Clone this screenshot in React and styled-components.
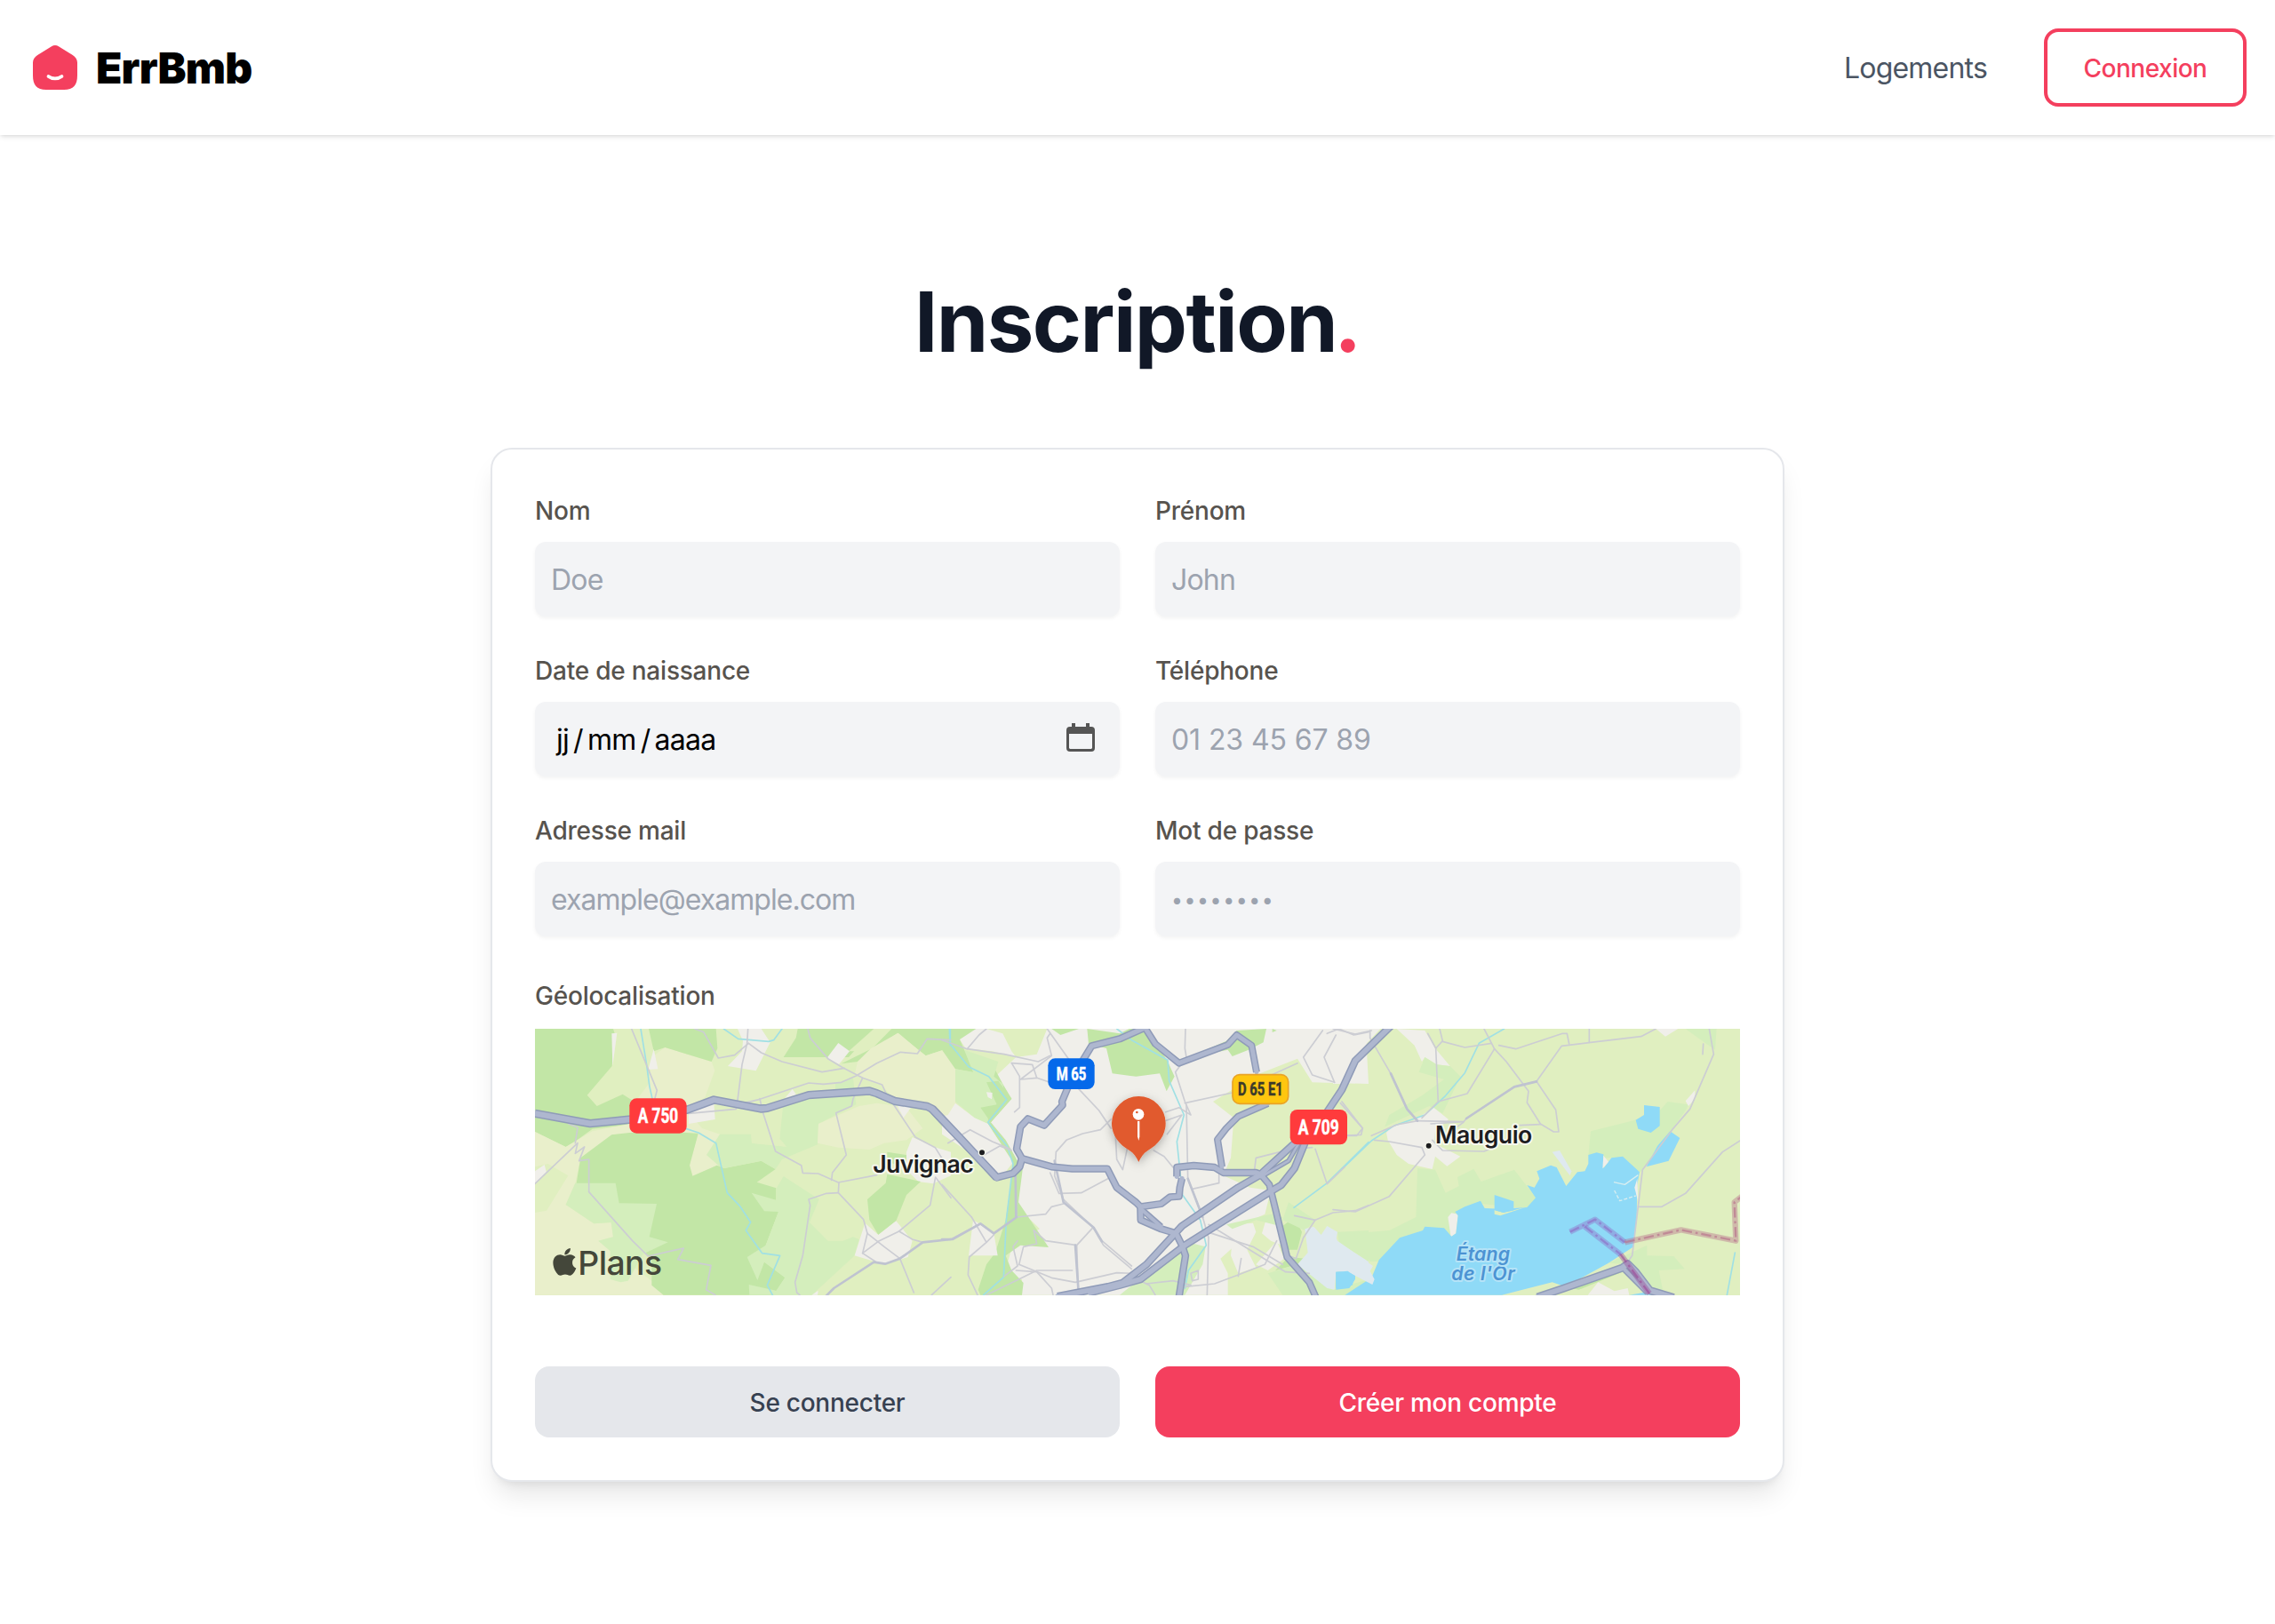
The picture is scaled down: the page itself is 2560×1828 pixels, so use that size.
import React from "react";
import styled, { createGlobalStyle } from "styled-components";
import { FaApple } from "react-icons/fa6";

const GlobalStyle = createGlobalStyle`
  *, *::before, *::after { box-sizing: border-box; }
  body {
    margin: 0;
    background: #fff;
    font-family: Inter, "Liberation Sans", sans-serif;
    -webkit-font-smoothing: antialiased;
  }
`;

const Page = styled.div`
  min-height: 1828px;
  display: flex;
  flex-direction: column;
`;

const NavBar = styled.header`
  height: 152px;
  padding: 0 32px;
  display: flex;
  align-items: center;
  justify-content: space-between;
  box-shadow: 0 2px 6px rgba(0, 0, 0, 0.1), 0 2px 4px -2px rgba(0, 0, 0, 0.1);
`;

const Brand = styled.a`
  display: flex;
  align-items: center;
  gap: 16px;
`;

const LogoIcon = styled.svg`
  width: 60px;
  height: 60px;
`;

const BrandName = styled.span`
  padding-top: 2px;
  font-size: 48px;
  line-height: 60px;
  font-weight: 900;
  letter-spacing: -0.8px;
  color: #000;
`;

const NavLinks = styled.nav`
  display: flex;
  align-items: center;
  gap: 64px;
`;

const NavLink = styled.a`
  padding-top: 2px;
  font-size: 32px;
  line-height: 48px;
  letter-spacing: -0.8px;
  color: #4b5563;
`;

const OutlineButton = styled.button`
  width: 228px;
  height: 88px;
  padding: 2px 0 0;
  border: 4px solid #f43f5e;
  border-radius: 16px;
  background: #fff;
  color: #f43f5e;
  font: 550 28px/40px Inter, "Liberation Sans", sans-serif;
  letter-spacing: -0.5px;
`;

const Main = styled.main`
  display: flex;
  flex-direction: column;
  align-items: center;
`;

const Title = styled.h1`
  margin: 162px 0 94px;
  font-size: 94px;
  line-height: 96px;
  font-weight: 700;
  letter-spacing: -1.6px;
  color: #111827;
`;

const Accent = styled.span`
  margin-left: -3px;
  color: #f43f5e;
`;

const Card = styled.form`
  width: 1456px;
  padding: 48px;
  border: 2px solid #e5e7eb;
  border-radius: 24px;
  background: #fff;
  box-shadow: 0 20px 30px -6px rgba(0, 0, 0, 0.1), 0 8px 12px -8px rgba(0, 0, 0, 0.1);
`;

const FieldGrid = styled.div`
  display: grid;
  grid-template-columns: 1fr 1fr;
  gap: 40px;
`;

const Field = styled.label`
  display: flex;
  flex-direction: column;
  gap: 16px;
`;

const Label = styled.span`
  height: 40px;
  padding-top: 1px;
  font-size: 28px;
  line-height: 40px;
  font-weight: 550;
  letter-spacing: -0.22px;
  color: #57534e;
`;

const Input = styled.input`
  height: 84px;
  width: 100%;
  padding: 1px 18px 0;
  border: 0;
  border-radius: 12px;
  background: #f3f4f6;
  box-shadow: 0 2px 4px rgba(0, 0, 0, 0.05);
  font: 400 ${(p) => p.$size || "32px"}/48px Inter, "Liberation Sans", sans-serif;
  letter-spacing: ${(p) => p.$tracking || "-0.8px"};
  &::placeholder { color: #9ca3af; opacity: 1; }
`;

const DateBox = styled.span`
  height: 84px;
  padding: 1px 26px 0 24px;
  border-radius: 12px;
  background: #f3f4f6;
  box-shadow: 0 2px 4px rgba(0, 0, 0, 0.05);
  display: flex;
  align-items: center;
  justify-content: space-between;
`;

const DateParts = styled.span`
  display: flex;
  gap: 5px;
  font-size: 32px;
  line-height: 48px;
  letter-spacing: -0.7px;
  color: #000;
`;

const CalendarIcon = styled.svg`
  width: 36px;
  height: 36px;
  margin-top: -5px;
`;

const GeoSection = styled.section`
  margin-top: 46px;
  display: flex;
  flex-direction: column;
  gap: 18px;
`;

const MapView = styled.svg`
  display: block;
  width: 1356px;
  height: 300px;
`;

const Actions = styled.div`
  margin-top: 80px;
  display: grid;
  grid-template-columns: 1fr 1fr;
  gap: 40px;
`;

const ActionButton = styled.button`
  height: 80px;
  padding: 2px 0 0;
  border: 0;
  border-radius: 16px;
  background: ${(p) => (p.$primary ? "#f43f5e" : "#e5e7eb")};
  color: ${(p) => (p.$primary ? "#fff" : "#374151")};
  font: 550 28px/40px Inter, "Liberation Sans", sans-serif;
  letter-spacing: -0.25px;
`;

const LAND = "#e0efc0";
const FOREST = "#c2e6a6";
const MINT = "#d4eebc";
const BEIGE = "#e9efcb";
const URBAN = "#f0efea";
const WATER = "#8fdaf7";
const AIRPORT = "#dfe9ef";

/* The map is drawn in three sheets (west, centre, east), each with its own origin. */
const SHEETS = { west: -36, centre: 1374, east: 2694 };

const AREAS = {
  west: [
    [FOREST, "36,54 300,54 305,70 296,180 212,278 245,315 332,275 375,302 380,340 350,378 230,392 175,432 140,453 36,402"],
    [BEIGE, "36,402 140,453 230,400 355,375 548,330 600,390 660,410 655,515 568,551 558,515 587,405 480,400 295,412 190,490 172,575 140,648 235,712 293,708 300,757 250,770 330,830 430,905 470,953 36,953"],
    [LAND, "36,520 80,510 148,550 75,668 36,675"],
    [BEIGE, "430,150 475,117 632,165 643,195 610,285 555,325 440,330 375,300 420,240"],
    [FOREST, "295,412 355,405 480,400 587,408 558,515 568,551 650,515 675,525 800,500 848,528 785,572 850,592 850,632 858,672 815,785 879,895 850,938 840,953 470,953 430,920 430,830 172,600 190,490"],
    [MINT, "172,575 308,575 320,643 447,645 422,757 485,775 400,815 350,905 325,910 290,900 290,805 250,770 300,757 293,708 235,712 140,648"],
    [MINT, "615,480 660,410 765,410 768,440 885,452 862,425 875,300 1110,220 1120,310 993,375 990,445 870,495 848,528 800,500 675,525 655,515"],
    [LAND, "765,360 865,330 862,425 885,452 768,440"],
    [LAND, "875,300 910,255 1050,238 1050,272 960,285 870,320"],
    [MINT, "850,595 875,552 995,630 963,708 1025,770 1075,770 1110,757 1130,765 1115,820 985,940 975,953 760,953 758,918 850,938 879,895 810,843 787,903 752,825 815,785 858,672 810,670 767,608 850,632"],
    [FOREST, "810,843 879,895 850,938 790,915"],
    [FOREST, "420,54 647,54 652,120 632,165 475,117 437,130"],
    [FOREST, "923,54 1180,54 1095,150 875,150 917,85"],
    [FOREST, "1070,172 1175,120 1240,54 1460,54 1460,150 1415,125 1355,145 1260,68 1170,130 1125,165"],
    [LAND, "1180,54 1235,54 1120,130 1095,130"],
    [BEIGE, "1125,165 1170,120 1262,68 1330,125 1355,145 1415,125 1455,150 1455,400 1380,310 1250,290 1200,240 1115,210"],
    [BEIGE, "993,375 1130,315 1190,305 1290,320 1345,390 1290,430 1215,440 1165,462 1060,455 990,440"],
    [URBAN, "738,95 720,54 800,54 830,100 782,196 687,180 735,130"],
    [URBAN, "1060,102 1098,130 1062,174 1022,152"],
    [URBAN, "555,335 640,305 644,360 555,375"],
    [URBAN, "437,122 451,190 418,192"],
    [URBAN, "295,70 313,68 298,180"],
    [URBAN, "905,258 918,276 880,288"],
    [URBAN, "1258,310 1305,320 1280,355"],
    [URBAN, "36,535 68,513 75,540 36,577"],
    [FOREST, "1225,470 1290,480 1290,530 1225,500"],
    [URBAN, "1310,420 1390,455 1440,470 1440,550 1380,577 1330,570 1290,530 1290,470"],
    [FOREST, "1225,545 1338,570 1290,615 1255,703 1195,750 1165,700 1158,630 1220,575"],
    [URBAN, "1255,703 1310,770 1295,825 1215,850 1115,820 1150,710 1195,750"],
    [URBAN, "992,938 990,953 970,953"],
  ],
  centre: [
    [URBAN, "35,54 1430,54 1440,240 1250,235 1200,155 1060,210 915,300 985,355 975,490 950,550 1040,590 1110,600 1090,680 1000,720 985,790 940,830 965,880 965,953 270,953 270,900 205,900 240,780 330,730 250,650 270,520 240,490 160,375 215,290 180,215 250,150 170,130 80,120"],
    [BEIGE, "0,120 45,190 45,310 0,350"],
    [FOREST, "0,54 115,54 60,90 75,125 100,150 165,165 205,240 235,290 165,370 215,430 272,530 258,640 360,792 265,785 215,820 235,870 275,912 270,953 130,953 122,935 150,850 180,810 215,700 235,560 240,510 155,375 150,255 100,200 45,190 0,125"],
    [MINT, "45,190 105,200 75,125 190,165 175,215 205,240 215,290 155,330 155,375 110,355 45,300"],
    [FOREST, "150,235 190,230 235,290 165,370 130,320 185,310"],
    [URBAN, "150,268 170,270 168,292 155,285"],
    [URBAN, "0,350 20,345 45,305 110,355 155,375 240,505 205,550 185,562 120,490 0,410"],
    [LAND, "150,54 355,54 320,140 250,150 235,130 205,70"],
    [FOREST, "370,54 462,54 400,75"],
    [FOREST, "490,54 600,70 640,50 685,54 760,160 785,215 758,265 735,205 655,215 575,205 555,120 495,105"],
    [FOREST, "800,165 960,95 995,60 1095,54 1085,100 1035,125 980,147 965,125 840,150"],
    [FOREST, "1115,54 1130,60 1115,66"],
    [URBAN, "105,700 125,712 175,745 188,820 90,820"],
    [URBAN, "985,715 1050,710 1060,740 1030,800 1060,860 1000,880 975,820"],
    [URBAN, "1095,695 1165,725 1160,790 1110,770 1080,745"],
    [URBAN, "1060,850 1130,770 1155,830 1100,870"],
    [MINT, "690,880 830,775 890,790 880,850 820,953 600,953 660,905"],
    [MINT, "960,715 1110,680 1150,690 1140,720 1060,700 980,730"],
    [FOREST, "1150,720 1190,690 1215,740 1200,800 1165,800"],
    [MINT, "1170,640 1260,700 1225,735 1150,700"],
    [FOREST, "1125,870 1170,825 1230,830 1230,852 1200,850"],
    [MINT, "1100,880 1200,850 1320,935 1440,900 1440,953 1150,953"],
    [AIRPORT, "1225,730 1255,722 1280,750 1300,720 1335,740 1330,770 1440,840 1440,910 1395,870 1330,875 1325,935 1300,930 1200,850 1235,810"],
    [MINT, "1335,740 1440,735 1440,840 1340,775"],
    [WATER, "1330,875 1395,872 1395,900 1375,930 1330,935"],
  ],
  east: [
    [URBAN, "0,54 160,54 70,150 30,240 0,240"],
    [URBAN, "215,54 310,60 345,120 395,180 350,175 310,150 300,165 275,110"],
    [MINT, "310,150 350,175 395,180 430,215 370,340 325,315 175,385 190,345 300,280 375,225 290,200"],
    [URBAN, "180,405 200,380 270,365 340,320 390,360 345,400 340,440 430,485 385,518 345,485 335,528 255,510 215,480 185,430"],
    [MINT, "285,525 345,530 380,608 425,585 420,555 475,527 500,570 612,530 685,625 655,660 500,645 410,690 395,755 300,735 225,765 155,840 125,840 70,745 190,735 280,690"],
    [MINT, "862,485 870,400 1020,362 1103,330 1130,300 1200,310 1190,330 1140,400 1050,525 1035,540 978,490 913,490"],
    [URBAN, "1222,262 1222,290 1200,315 1190,298"],
    [MINT, "1190,54 1295,54 1290,125 1240,90"],
    [URBAN, "1090,54 1165,54 1122,80"],
    [URBAN, "388,690 400,676 422,680 415,745 398,757"],
    [WATER, "40,953 130,895 155,835 225,760 303,735 310,722 375,727 400,755 415,745 422,685 412,672 445,655 498,635 512,660 565,662 655,657 684,625 655,582 680,590 697,560 688,535 735,515 755,522 787,585 825,538 850,535 862,510 862,480 890,472 913,478 913,525 940,490 978,485 1035,538 1027,580 1025,700 1015,790 930,845 830,900 775,922 740,910 640,935 570,953"],
    [URBAN, "1027,560 1030,640 1018,590"],
    [URBAN, "913,482 930,503 910,526"],
    [LAND, "545,665 575,675 610,667 655,655 565,685 545,680"],
    [WATER, "545,615 610,637 610,667 575,675 545,667"],
    [WATER, "1050,312 1103,318 1103,382 1073,405 1030,392 1022,362 1050,345"],
    [WATER, "1138,400 1171,423 1133,500 1058,520 1095,450"],
    [AIRPORT, "0,735 15,770 135,855 125,872 140,900 133,918 60,880 0,870"],
    [WATER, "10,875 50,872 75,890 65,920 10,930"],
    [AIRPORT, "740,470 765,465 805,535 800,550"],
    [FOREST, "830,900 975,850 990,870 830,935 775,925"],
    [MINT, "930,845 1060,785 1060,820 1150,822 1187,865 1100,870 1115,945 1060,920 1000,850"],
    [URBAN, "860,953 895,910 950,940 995,930 1000,953"],
    [WATER, "1000,953 1060,943 1080,953"],
  ],
};

const STREAMS = {
  west: [
    "393,54 412,170 423,250 432,290", "548,392 588,405 647,440 685,608 727,652 764,707 748,735 803,812 863,820 820,920 838,953",
    "673,54 722,88 825,97 842,92 870,54", "1438,54 1438,110",
  ],
  centre: [
    "25,54 27,105 90,182 158,215 218,293 155,370 220,450 240,510 217,700 208,893 140,953",
    "590,54 640,92 762,160 767,230 817,345 793,435 812,615 872,700 892,785 832,870 820,930", "1188,658 1300,575 1440,437",
  ],
  east: ["0,557 130,432 205,382 310,345 380,280 445,203 493,103 578,54", "1357,810 1330,953"],
};

const MINOR = {
  west: [
    "362,54 448,262 440,292", "575,54 605,65 655,153 710,143 757,103", "755,54 752,103 735,175 720,295 715,325 555,340",
    "757,103 800,135 870,165 1005,200 1080,187", "957,54 965,85 1025,155 1075,185 1142,220 1208,243 1220,270 1320,420 1387,455 1440,540",
    "720,310 795,292 960,237 1010,241 1070,235 1120,213 1190,170 1270,133 1327,138 1360,88 1440,92",
    "795,290 805,335 848,468 935,515 940,541 992,543 1060,573 1190,548", "1142,220 1110,290 1105,315 1052,338 1087,480 1040,540 1037,565",
    "1062,573 1060,608 1145,698 1158,745 1215,790 1268,830 1315,945", "1060,608 1020,610 960,630 965,650 940,820 914,910 920,945 930,953",
    "36,577 180,440 172,475 203,453 185,500 218,495 218,605 365,770 418,822 538,795 518,833 630,853 614,935 645,953",
    "150,375 180,388 172,440", "1158,745 1142,812 1185,840", "1142,812 1195,772 1265,738 1310,765 1345,775",
    "1265,738 1370,650 1388,555 1440,625", "1440,893 1375,953",
  ],
  centre: [
    "0,92 85,122 210,140 325,165 365,145", "85,122 125,75 150,54", "355,54 430,160", "365,70 355,85 370,145 265,225 320,220 395,245",
    "235,170 262,215 262,320 245,335", "235,170 305,175 320,220", "455,250 530,330 570,390", "570,360 535,395 475,408 420,430 385,470 380,550 410,630 510,725 540,770 640,855",
    "365,540 395,610 470,608 560,560", "510,725 455,785 460,930", "455,785 350,770 310,735", "510,725 530,760 545,785 640,865",
    "248,545 252,690 175,745 130,712 30,765", "252,690 350,680 370,655 410,645", "255,770 240,790 255,855 210,890", "310,735 320,780 275,790 260,850",
    "260,850 370,895 450,910 590,878 640,880", "375,953 370,930 320,875 250,870", "150,953 270,895 320,870 440,870",
    "100,690 150,775 175,750", "150,775 92,825 88,885 120,953", "822,54 820,120 825,150 788,200 820,300 840,345 800,320 755,335",
    "820,305 980,270 1200,170", "825,310 830,560 880,690 900,760 895,953", "740,370 810,345 760,410", "585,400 590,495 610,530 625,460",
    "715,465 750,485 780,522", "845,595 935,575 935,545", "900,715 1160,875 1240,880", "895,740 1050,790 1150,850",
    "820,925 920,915 1000,885 1090,850 1130,770", "690,915 780,905 840,920", "1010,830 1000,890", "840,880 865,870 865,900 845,905 840,880",
    "1285,60 1220,150 1250,210 1325,235", "1330,75 1290,150 1325,235", "1300,70 1340,54 1390,75 1440,65",
    "1345,305 1420,390 1400,415 1370,415", "1260,460 1300,578 1360,520", "1055,530 1060,490 1180,460 1250,455",
    "1190,685 1260,700 1320,675 1395,668 1440,650", "1260,700 1220,760 1195,830 1170,820", "0,580 100,690", "20,440 95,395 170,435 230,460",
    "125,490 195,450 235,465", "640,890 700,920 720,953",
  ],
  east: [
    "125,60 125,85 195,205 250,325 285,365", "320,70 347,120 355,300 300,355", "347,120 370,95 360,54", "370,97 445,117 535,103",
    "510,54 545,122 585,165 660,265 655,303 700,375 745,402 762,402 752,328 687,232", "545,122 453,273 355,300",
    "560,110 617,122 775,70 790,70 797,105", "865,54 865,100", "1090,54 1040,80 870,100 772,112 687,232 612,250 450,357 440,370 415,388",
    "285,365 440,368 330,375", "630,380 700,377", "140,430 190,435 300,455 310,480 190,620 75,672 0,665", "130,415 215,378 285,365",
    "335,430 370,465 510,468 530,460", "30,300 100,390 95,412 30,415", "1270,54 1285,140 1205,325 1145,395 1045,530 1010,820 990,850",
    "1030,655 1110,655 1190,610 1315,470 1374,432", "1250,105 1248,140", "0,54 75,72 130,60",
  ],
};

const SECONDARY = {
  west: ["1015,960 1045,930 1180,842 1218,848 1268,830 1345,775 1440,765"],
  centre: ["0,765 35,765 130,712 175,745 252,690", "248,545 250,690", "450,785 460,930", "380,500 410,640 512,725 540,772", "830,560 880,690"],
  east: ["195,205 250,325 285,365", "687,232 612,250 450,357"],
};

const HIGHWAYS = {
  west: [["36,340 222,374 360,360 548,328 640,294 798,324 820,322 960,278 1165,264 1190,272 1250,298 1360,316 1378,325 1470,422 1595,557", 21]],
  centre: [
    ["-35,325 0,362 185,556 240,542 262,520 270,492", 19],
    ["690,48 600,88 505,112 470,170 430,240 405,300 407,312 345,380 290,358 265,385 252,460 270,492 370,520 440,527 558,527 590,590 655,640 670,655 740,645 770,622 800,620 803,590 810,560", 18],
    ["793,553 793,522 850,516 920,522 950,540 1060,540 1082,548", 18],
    ["685,50 720,105 800,170 965,108 995,75 1045,110 1062,200", 17],
    ["1100,306 1000,350 960,390 930,428 945,520", 17],
    ["670,655 671,700 740,730 790,745 810,785 822,820 800,960", 18],
    ["675,665 740,722", 14],
    ["1520,40 1440,118 1395,162 1350,260 1290,350 1180,450 1070,550 1000,590 810,720 690,850 610,912 560,925 390,958", 19],
    ["1225,440 1190,525 1145,582 1110,603 820,785 670,900 600,920 500,945", 19],
    ["1205,440 1170,500 1075,555", 10],
    ["1075,545 1105,580 1120,640 1165,825 1240,910 1262,960", 17],
  ],
  east: [["690,960 780,930 975,862 995,848 1022,875 1070,938 1150,962", 20], ["985,868 1062,945", 14]],
};

/* Administrative limits: lavender over the lagoon, rose over the land. */
const BOUNDARIES = [
  ["#8f6fc8", "800,740 885,698 985,775"],
  ["#b8708c", "985,775 1175,733 1360,770 1355,640 1380,620"],
  ["#8f6fc8", "850,722 970,815"],
  ["#9c4f9a", "970,815 1068,948"],
];

function Sheets({ children }) {
  return Object.entries(SHEETS).map(([name, dx]) => (
    <g key={name} transform={`translate(${dx} -54)`}>
      {children(name)}
    </g>
  ));
}

function RoadBadge({ x, y, w, h, fill, stroke, color = "#fff", size = 66, textWidth, children }) {
  return (
    <g>
      <rect x={x} y={y} width={w} height={h} rx="24" fill={fill} stroke={stroke} strokeWidth={stroke ? 5 : 0} />
      <text
        x={x + w / 2 - textWidth / 2}
        y={y + h / 2 + size * 0.36}
        fontFamily="Roboto, sans-serif"
        fontSize={size}
        fontWeight="700"
        fill={color}
        stroke={color}
        strokeWidth="1.5"
        textLength={textWidth}
        lengthAdjust="spacingAndGlyphs"
      >
        {children}
      </text>
    </g>
  );
}

function Place({ x, y, width, size = 80, fill = "#1d1d1f", halo = "#f7f8ee", italic, children }) {
  return (
    <text
      x={x}
      y={y}
      fontSize={size}
      fontWeight="600"
      fontStyle={italic ? "italic" : "normal"}
      fill={fill}
      stroke={halo}
      strokeWidth="12"
      strokeLinejoin="round"
      paintOrder="stroke"
      textLength={width}
      lengthAdjust="spacing"
    >
      {children}
    </text>
  );
}

function GeoMap() {
  return (
    <MapView viewBox="0 0 4068 900" preserveAspectRatio="none" fontFamily="Inter, sans-serif">
      <defs>
        <filter id="pinShadow" x="-40%" y="-40%" width="180%" height="180%">
          <feDropShadow dx="0" dy="10" stdDeviation="16" floodColor="#000" floodOpacity="0.28" />
        </filter>
      </defs>
      <rect width="4068" height="900" fill={LAND} />
      <Sheets>{(s) => AREAS[s].map(([fill, points], i) => <polygon key={i} fill={fill} points={points} />)}</Sheets>
      <g fill="none" strokeLinejoin="round" strokeLinecap="round">
        <g stroke="#a0e0e4" strokeWidth="5">
          <Sheets>{(s) => STREAMS[s].map((points, i) => <polyline key={i} points={points} />)}</Sheets>
        </g>
        <g stroke="#cccdd3" strokeWidth="5">
          <Sheets>{(s) => MINOR[s].map((points, i) => <polyline key={i} points={points} />)}</Sheets>
        </g>
        <g stroke="#bfc3d0" strokeWidth="8">
          <Sheets>{(s) => SECONDARY[s].map((points, i) => <polyline key={i} points={points} />)}</Sheets>
        </g>
        <g stroke="#8f9bb8" strokeLinecap="butt">
          <Sheets>{(s) => HIGHWAYS[s].map(([points, w], i) => <polyline key={i} points={points} strokeWidth={w + 7} />)}</Sheets>
        </g>
        <g stroke="#aeb7cf">
          <Sheets>{(s) => HIGHWAYS[s].map(([points, w], i) => <polyline key={i} points={points} strokeWidth={w - 2} />)}</Sheets>
        </g>
        <g transform="translate(2694 -54)" strokeLinecap="butt">
          {BOUNDARIES.map(([color, points]) => (
            <g key={points} stroke={color}>
              <polyline points={points} strokeOpacity="0.42" strokeWidth="19" />
              <polyline points={points} strokeOpacity="0.65" strokeWidth="7" strokeDasharray="34 12 8 12" />
            </g>
          ))}
          <polyline points="948,572 985,580 1030,548" stroke="#d8eef0" strokeWidth="4" />
          <polyline points="950,600 968,635 1022,618" stroke="#d8eef0" strokeWidth="4" strokeDasharray="12 6" />
        </g>
      </g>

      <g transform="translate(-36 -54)">
        <RoadBadge x={355} y={289} w={193} h={118} fill="#ff3b3c" size={70} textWidth={136}>A 750</RoadBadge>
        <Place x={1177} y={540} width={340}>Juvignac</Place>
        <circle cx="1545" cy="472" r="11" fill="#1d1d1f" stroke="#f7f8ee" strokeWidth="4" />
        <FaApple x={83} y={788} size={106} color="#44473a" />
        <text x="181" y="886" fontSize="112" fontWeight="500" fill="#44473a" textLength="284" lengthAdjust="spacing">Plans</text>
      </g>
      <g transform="translate(1374 -54)">
        <RoadBadge x={358} y={154} w={157} h={104} fill="#0569ea" size={58} textWidth={101}>M 65</RoadBadge>
        <RoadBadge x={981} y={209} w={188} h={98} fill="#ffc60f" stroke="#e9a327" color="#3b3a2b" size={58} textWidth={152}>D 65 E1</RoadBadge>
        <RoadBadge x={1175} y={327} w={193} h={118} fill="#ff3b3c" size={70} textWidth={138}>A 709</RoadBadge>
        <path
          d="M664 282a91 91 0 0 1 91 91c0 42-26 73-60 92-15 9-24 24-31 39-7-15-16-30-31-39-34-19-60-50-60-92a91 91 0 0 1 91-91z"
          fill="#e15a2d"
          filter="url(#pinShadow)"
        />
        <circle cx="663" cy="343" r="19" fill="#fff" />
        <circle cx="658" cy="336" r="4" fill="#e15a2d" />
        <path d="M660 366h7v52l-3 14-4-14z" fill="#fff" />
      </g>
      <g transform="translate(2694 -54)">
        <Place x={345} y={440} width={328}>Mauguio</Place>
        <circle cx="323" cy="449" r="11" fill="#1d1d1f" stroke="#f7f8ee" strokeWidth="4" />
        <Place x={400} y={902} width={214} size={64} fill="#4c93d3" halo="#b5e3f7" italic>de l'Or</Place>
        <Place x={416} y={838} width={181} size={64} fill="#4c93d3" halo="#b5e3f7" italic>Étang</Place>
      </g>
    </MapView>
  );
}

function Logo() {
  return (
    <LogoIcon viewBox="0 0 24 24">
      <path
        d="M10.4 2.45C11.4 1.85 12.6 1.85 13.6 2.45L19.9 6.35C21.2 7.15 22 8.3 22 9.8V15.5C22 20 20.3 22 16 22H8C3.7 22 2 20 2 15.5V9.8C2 8.3 2.8 7.15 4.1 6.35Z"
        fill="#f43f5e"
      />
      <path d="M9 16c1.7 1.3 4.3 1.3 6 0" fill="none" stroke="#fff" strokeWidth="1.5" strokeLinecap="round" />
    </LogoIcon>
  );
}

function TextField({ label, ...input }) {
  return (
    <Field>
      <Label>{label}</Label>
      <Input {...input} />
    </Field>
  );
}

export default function App() {
  return (
    <Page>
      <GlobalStyle />
      <NavBar>
        <Brand>
          <Logo />
          <BrandName>ErrBmb</BrandName>
        </Brand>
        <NavLinks>
          <NavLink>Logements</NavLink>
          <OutlineButton type="button">Connexion</OutlineButton>
        </NavLinks>
      </NavBar>
      <Main>
        <Title>
          Inscription<Accent>.</Accent>
        </Title>
        <Card>
          <FieldGrid>
            <TextField label="Nom" placeholder="Doe" />
            <TextField label="Prénom" placeholder="John" />
            <Field as="div">
              <Label>Date de naissance</Label>
              <DateBox>
                <DateParts>
                  <span>jj</span>
                  <span>/</span>
                  <span>mm</span>
                  <span>/</span>
                  <span>aaaa</span>
                </DateParts>
                <CalendarIcon viewBox="0 0 36 36">
                  <path d="M8 2h4v4h12V2h4v4h2a4 4 0 0 1 4 4v20a4 4 0 0 1-4 4H6a4 4 0 0 1-4-4V10a4 4 0 0 1 4-4h2zM5 14v16l1 1h24l1-1V14z" fill="#555" fillRule="evenodd" />
                </CalendarIcon>
              </DateBox>
            </Field>
            <TextField label="Téléphone" placeholder="01 23 45 67 89" $tracking="-0.1px" />
            <TextField label="Adresse mail" placeholder="example@example.com" $tracking="-0.95px" />
            <TextField label="Mot de passe" type="password" placeholder="••••••••" $size="23px" $tracking="1.6px" />
          </FieldGrid>
          <GeoSection>
            <Label>Géolocalisation</Label>
            <GeoMap />
          </GeoSection>
          <Actions>
            <ActionButton type="button">Se connecter</ActionButton>
            <ActionButton type="button" $primary>
              Créer mon compte
            </ActionButton>
          </Actions>
        </Card>
      </Main>
    </Page>
  );
}
